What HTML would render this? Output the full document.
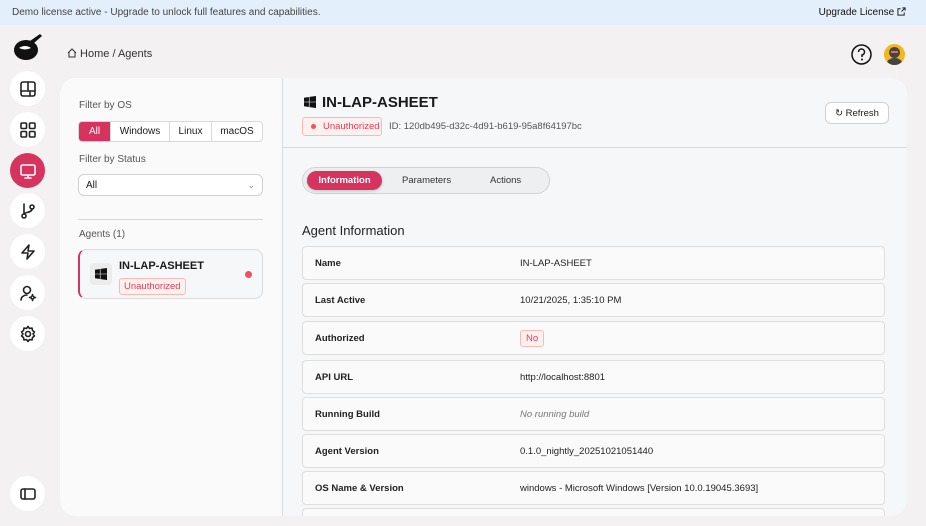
<!DOCTYPE html>
<html><head><meta charset="utf-8"><style>
*{box-sizing:border-box;margin:0;padding:0}
body{width:926px;height:526px;overflow:hidden;background:#f3f1f2;font-family:"Liberation Sans",sans-serif;color:#1a1a1a;position:relative}
.banner{position:absolute;left:0;top:0;width:926px;height:25px;background:#e3f0fb;font-size:10px;color:#444;line-height:25px;padding-left:12px}
.banner .up{position:absolute;right:20px;top:0;color:#111}
.ic{position:absolute;left:10px;width:35px;height:35px;border-radius:50%;background:#fff;display:flex;align-items:center;justify-content:center}
.ic svg{width:18px;height:18px;fill:none;stroke:#222;stroke-width:1.6;stroke-linecap:round;stroke-linejoin:round}
.ic.act{background:#d6335e}.ic.act svg{stroke:#fff}
.crumb{position:absolute;left:67px;top:48px;font-size:11px;color:#333}
.card{position:absolute;left:60px;top:78px;width:847px;height:438px;border-radius:16px;background:#f6f7f9;overflow:hidden}
.left{position:absolute;left:0;top:0;width:223px;height:438px;background:#fafafa;border-right:1px solid #dcdcdc}
.lbl{position:absolute;left:19px;font-size:10px;color:#555}
.seg{position:absolute;left:18px;top:43px;width:185px;height:21px;border:1px solid #d8d8d8;border-radius:4px;display:flex;font-size:10px;background:#fff;overflow:hidden}
.seg div{display:flex;align-items:center;justify-content:center;border-right:1px solid #d8d8d8}
.sel{position:absolute;left:18px;top:96px;width:185px;height:22px;border:1px solid #d0d0d0;border-radius:6px;background:#fff;font-size:10px;line-height:21px;padding-left:7px}
.agent{position:absolute;left:18px;top:171px;width:185px;height:50px;border:1px solid #dadada;border-left:2px solid #d6335e;border-radius:8px;background:#f6f7f9}
.badge{display:inline-block;border:1px solid #f9b9b9;background:#fff0f0;color:#e0405a;font-size:9.5px;border-radius:3px;padding:2px 4px}
.row{position:absolute;left:242px;width:583px;height:34px;border:1px solid #dedede;border-radius:4px;background:#fafafa;font-size:9.5px}
.row .k{position:absolute;left:12px;top:0;line-height:33px;font-weight:bold;color:#222}
.row .v{position:absolute;left:217px;top:0;line-height:33px;color:#222}
</style></head><body>
<div class="banner">Demo license active - Upgrade to unlock full features and capabilities.<span class="up">Upgrade License <svg width="9" height="9" viewBox="0 0 10 10" style="vertical-align:-1px"><path d="M8 6v3H1V2h3M6 1h3v3M9 1L5 5" fill="none" stroke="#222" stroke-width="1.1"/></svg></span></div>

<svg style="position:absolute;left:12px;top:32px" width="32" height="30" viewBox="0 0 32 30"><ellipse cx="14" cy="18" rx="12" ry="10" fill="#111"/><path d="M18 9 L28 2 L30 4 L22 11Z" fill="#111"/><path d="M7 16 q6 -4 12 0 q-6 3 -12 0z" fill="#fff"/></svg>
<div class="ic" style="top:71px"><svg viewBox="0 0 18 18"><rect x="2" y="2" width="14" height="14" rx="2"/><path d="M2 11h14M9 2v9M11 11v5"/></svg></div>
<div class="ic" style="top:112px"><svg viewBox="0 0 18 18"><rect x="2" y="2" width="5.5" height="5.5" rx="1"/><rect x="10.5" y="2" width="5.5" height="5.5" rx="1"/><rect x="2" y="10.5" width="5.5" height="5.5" rx="1"/><rect x="10.5" y="10.5" width="5.5" height="5.5" rx="1"/></svg></div>
<div class="ic act" style="top:153px"><svg viewBox="0 0 18 18"><rect x="2" y="3" width="14" height="10" rx="1.5"/><path d="M9 13v3M6 16h6"/></svg></div>
<div class="ic" style="top:193px"><svg viewBox="0 0 18 18"><circle cx="5" cy="14" r="2"/><circle cx="13" cy="5" r="2"/><path d="M5 2v10M13 7c0 4-8 3-8 5"/></svg></div>
<div class="ic" style="top:234px"><svg viewBox="0 0 18 18"><path d="M10 2L3 10h6l-1 6 7-8H9z"/></svg></div>
<div class="ic" style="top:275px"><svg viewBox="0 0 18 18"><circle cx="8" cy="6" r="3.5"/><path d="M2 16c0-3 3-5 6-5"/><circle cx="13.5" cy="13.5" r="1.5"/><path d="M13.5 10.5v1M13.5 15.5v1M10.5 13.5h1M15.5 13.5h1"/></svg></div>
<div class="ic" style="top:316px"><svg viewBox="0 0 18 18"><circle cx="9" cy="9" r="2.5"/><path d="M9 1.5l1.5 2 2.5-.5.5 2.5 2 1.5-1.5 2 1.5 2-2 1.5-.5 2.5-2.5-.5L9 16.5l-1.5-2-2.5.5-.5-2.5-2-1.5 1.5-2-1.5-2 2-1.5.5-2.5 2.5.5z"/></svg></div>
<div class="ic" style="top:476px"><svg viewBox="0 0 18 18"><rect x="2" y="4" width="14" height="10" rx="2"/><path d="M6 4v10"/></svg></div>

<div class="crumb"><svg width="10" height="10" viewBox="0 0 10 10" style="vertical-align:-1px"><path d="M1 5L5 1l4 4M2 4v5h6V4" fill="none" stroke="#333" stroke-width="1"/></svg> Home / Agents</div>
<svg style="position:absolute;left:851px;top:44px" width="21" height="21" viewBox="0 0 21 21"><circle cx="10.5" cy="10.5" r="9.5" fill="none" stroke="#111" stroke-width="1.5"/><path d="M7.5 8a3 3 0 1 1 3.5 3v2" fill="none" stroke="#111" stroke-width="1.5"/><circle cx="11" cy="15.5" r="1" fill="#111"/></svg>
<div style="position:absolute;left:884px;top:44px;width:21px;height:21px;border-radius:50%;background:#f1b81c;overflow:hidden"><div style="position:absolute;left:5px;top:3px;width:11px;height:11px;border-radius:50%;background:#444"></div><div style="position:absolute;left:3px;top:14px;width:15px;height:10px;border-radius:50% 50% 0 0;background:#444"></div><div style="position:absolute;left:7px;top:7px;width:7px;height:2px;background:#e66"></div></div>

<div class="card">
<div class="left">
<div class="lbl" style="top:22px">Filter by OS</div>
<div class="seg"><div style="width:32px;background:#d6335e;color:#fff">All</div><div style="width:59px">Windows</div><div style="width:42px">Linux</div><div style="flex:1;border:none">macOS</div></div>
<div class="lbl" style="top:76px">Filter by Status</div>
<div class="sel">All<span style="position:absolute;right:7px;top:0;color:#888;font-size:9px">&#8964;</span></div>
<div style="position:absolute;left:18px;top:141px;width:185px;height:1px;background:#d8d8d8"></div>
<div class="lbl" style="top:151px">Agents (1)</div>
<div class="agent">
<div style="position:absolute;left:10px;top:13px;width:22px;height:22px;border-radius:4px;background:#ececec"></div>
<svg style="position:absolute;left:15px;top:18px" width="12" height="12" viewBox="0 0 12 12" fill="#111"><path d="M0 1.7l4.9-.7v4.7H0zM5.5 .9L12 0v5.7H5.5zM0 6.3h4.9V11L0 10.3zM5.5 6.3H12V12l-6.5-.9z"/></svg>
<div style="position:absolute;left:39px;top:10px;font-size:11px;font-weight:bold">IN-LAP-ASHEET</div>
<div style="position:absolute;left:39px;top:26px"><span class="badge">Unauthorized</span></div>
<div style="position:absolute;right:10px;top:21px;width:7px;height:7px;border-radius:50%;background:#f05060"></div>
</div>
</div>

<svg style="position:absolute;left:244px;top:18px" width="12" height="12" viewBox="0 0 12 12" fill="#111"><path d="M0 1.7l4.9-.7v4.7H0zM5.5 .9L12 0v5.7H5.5zM0 6.3h4.9V11L0 10.3zM5.5 6.3H12V12l-6.5-.9z"/></svg>
<div style="position:absolute;left:262px;top:16px;font-size:15px;font-weight:bold">IN-LAP-ASHEET</div>
<div style="position:absolute;left:242px;top:39px;width:80px;height:19px;border:1px solid #f9b9b9;background:#fff0f0;border-radius:3px;font-size:9.5px;color:#e0405a;line-height:17px;padding-left:20px"><span style="position:absolute;left:8px;top:6px;width:5px;height:5px;border-radius:50%;background:#f05060"></span>Unauthorized</div>
<div style="position:absolute;left:329px;top:43px;font-size:9.5px;color:#555">ID: 120db495-d32c-4d91-b619-95a8f64197bc</div>
<div style="position:absolute;left:765px;top:24px;width:64px;height:22px;border:1px solid #d0d0d0;border-radius:6px;background:#fff;font-size:9.5px;line-height:21px;text-align:center">&#8635; Refresh</div>
<div style="position:absolute;left:223px;top:69px;width:624px;height:1px;background:#dadada"></div>

<div style="position:absolute;left:242px;top:89px;width:248px;height:27px;border:1px solid #d2d2d2;border-radius:14px;background:#eeeff1;font-size:9.5px;color:#333">
<div style="position:absolute;left:4px;top:3px;width:75px;height:19px;border-radius:10px;background:#d6335e;color:#fff;font-weight:bold;text-align:center;line-height:19px;box-shadow:0 1px 3px rgba(0,0,0,.2)">Information</div>
<div style="position:absolute;left:99px;top:0;line-height:26px">Parameters</div>
<div style="position:absolute;left:187px;top:0;line-height:26px">Actions</div>
</div>
<div style="position:absolute;left:242px;top:145px;font-size:13px;color:#222">Agent Information</div>

<div class="row" style="top:168px"><div class="k">Name</div><div class="v">IN-LAP-ASHEET</div></div>
<div class="row" style="top:205px"><div class="k">Last Active</div><div class="v">10/21/2025, 1:35:10 PM</div></div>
<div class="row" style="top:243px"><div class="k">Authorized</div><div class="v" style="top:8px;line-height:normal"><span class="badge" style="padding:2px 5px">No</span></div></div>
<div class="row" style="top:282px"><div class="k">API URL</div><div class="v">http://localhost:8801</div></div>
<div class="row" style="top:319px"><div class="k">Running Build</div><div class="v" style="font-style:italic;color:#777">No running build</div></div>
<div class="row" style="top:356px"><div class="k">Agent Version</div><div class="v">0.1.0_nightly_20251021051440</div></div>
<div class="row" style="top:393px"><div class="k">OS Name &amp; Version</div><div class="v">windows - Microsoft Windows [Version 10.0.19045.3693]</div></div>
<div class="row" style="top:430px"></div>
</div>
</body></html>
